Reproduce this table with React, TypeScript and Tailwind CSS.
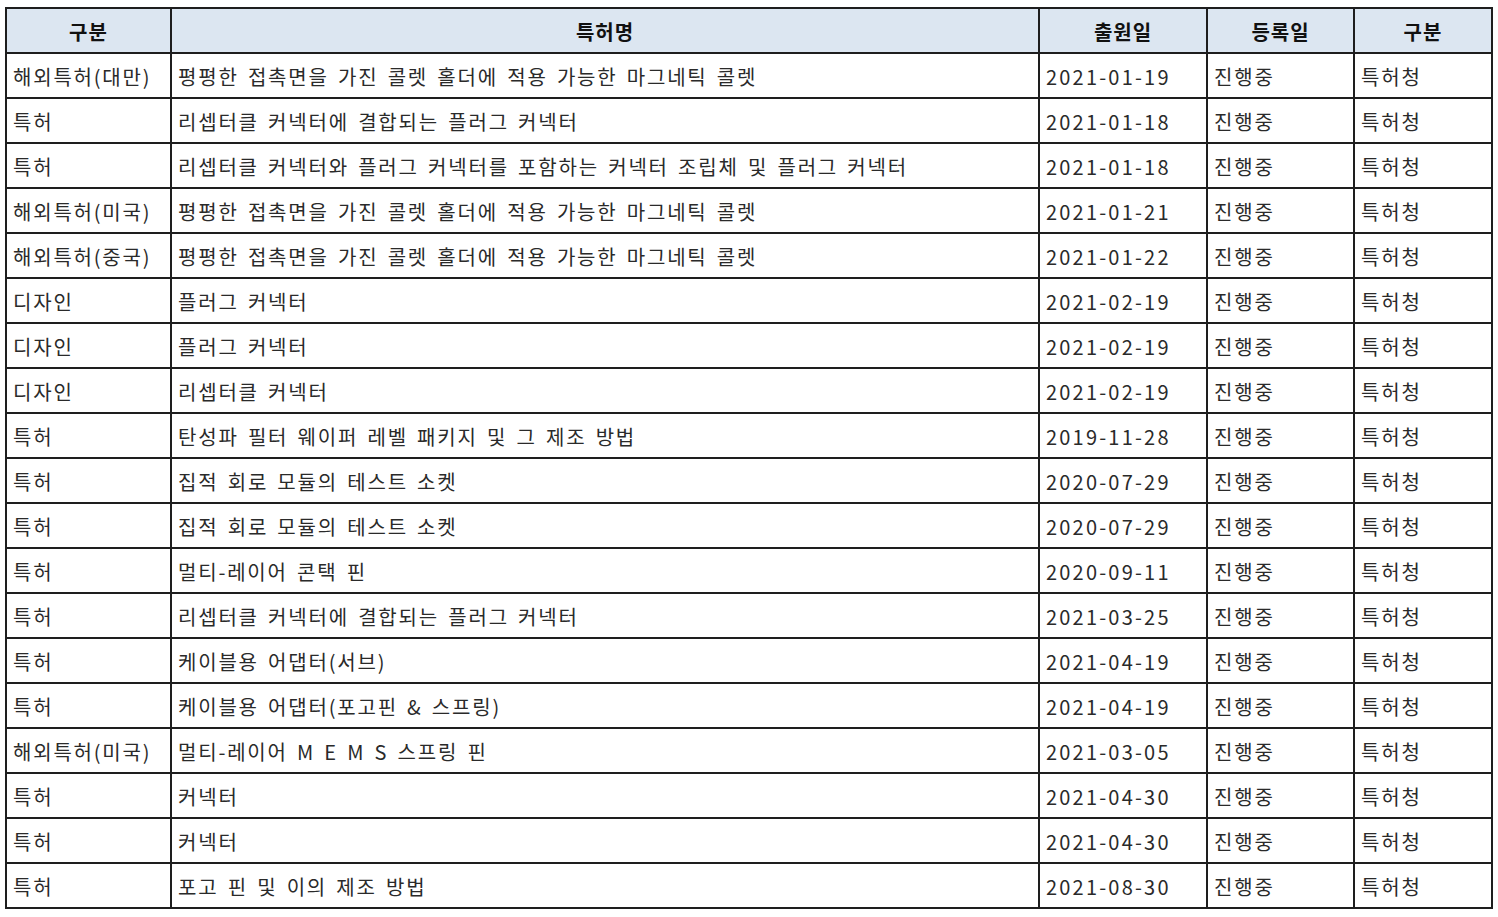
const rows: [string, string, string][] = [
  ["해외특허(대만)", "평평한 접촉면을 가진 콜렛 홀더에 적용 가능한 마그네틱 콜렛", "2021-01-19"],
  ["특허", "리셉터클 커넥터에 결합되는 플러그 커넥터", "2021-01-18"],
  ["특허", "리셉터클 커넥터와 플러그 커넥터를 포함하는 커넥터 조립체 및 플러그 커넥터", "2021-01-18"],
  ["해외특허(미국)", "평평한 접촉면을 가진 콜렛 홀더에 적용 가능한 마그네틱 콜렛", "2021-01-21"],
  ["해외특허(중국)", "평평한 접촉면을 가진 콜렛 홀더에 적용 가능한 마그네틱 콜렛", "2021-01-22"],
  ["디자인", "플러그 커넥터", "2021-02-19"],
  ["디자인", "플러그 커넥터", "2021-02-19"],
  ["디자인", "리셉터클 커넥터", "2021-02-19"],
  ["특허", "탄성파 필터 웨이퍼 레벨 패키지 및 그 제조 방법", "2019-11-28"],
  ["특허", "집적 회로 모듈의 테스트 소켓", "2020-07-29"],
  ["특허", "집적 회로 모듈의 테스트 소켓", "2020-07-29"],
  ["특허", "멀티-레이어 콘택 핀", "2020-09-11"],
  ["특허", "리셉터클 커넥터에 결합되는 플러그 커넥터", "2021-03-25"],
  ["특허", "케이블용 어댑터(서브)", "2021-04-19"],
  ["특허", "케이블용 어댑터(포고핀 & 스프링)", "2021-04-19"],
  ["해외특허(미국)", "멀티-레이어 M E M S 스프링 핀", "2021-03-05"],
  ["특허", "커넥터", "2021-04-30"],
  ["특허", "커넥터", "2021-04-30"],
  ["특허", "포고 핀 및 이의 제조 방법", "2021-08-30"],
];

const cell = "border-2 border-[#1e1e1e] h-[45px] px-[6px] pt-[2px] align-middle whitespace-nowrap";

export default function App() {
  return (
    <div
      className="min-h-screen bg-white pl-[5px] pt-[7px] text-[#2a2a2a]"
      style={{ fontFamily: '"Noto Sans CJK KR", "Noto Sans", sans-serif' }}
    >
      <table className="w-[1486px] table-fixed border-collapse border-2 border-[#1e1e1e] text-[20px] tracking-[1.8px] [word-spacing:3px]">
        <colgroup>
          <col className="w-[165px]" />
          <col className="w-[868px]" />
          <col className="w-[168px]" />
          <col className="w-[147px]" />
          <col className="w-[138px]" />
        </colgroup>
        <thead>
          <tr className="bg-[#dce6f1] text-[#111]">
            {["구분", "특허명", "출원일", "등록일", "구분"].map((h, i) => (
              <th key={i} className={`${cell} text-center font-bold tracking-[1px]`}>
                {h}
              </th>
            ))}
          </tr>
        </thead>
        <tbody>
          {rows.map(([kind, name, date], i) => (
            <tr key={i}>
              <td className={cell}>{kind}</td>
              <td className={cell}>{name}</td>
              <td className={`${cell} tracking-[2.2px]`}>{date}</td>
              <td className={cell}>진행중</td>
              <td className={cell}>특허청</td>
            </tr>
          ))}
        </tbody>
      </table>
    </div>
  );
}
